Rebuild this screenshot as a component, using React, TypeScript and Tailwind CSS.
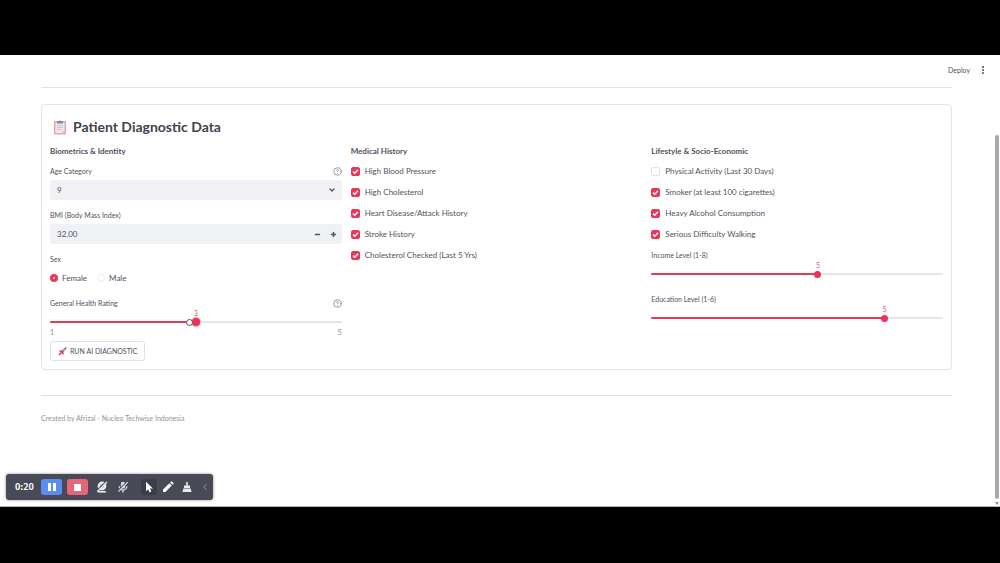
import { useId, useState } from 'react';
import { ChevronDown, ChevronLeft, CircleHelp, EllipsisVertical, Minus, Plus } from 'lucide-react';

const medicalHistory = [
  { label: 'High Blood Pressure', checked: true },
  { label: 'High Cholesterol', checked: true },
  { label: 'Heart Disease/Attack History', checked: true },
  { label: 'Stroke History', checked: true },
  { label: 'Cholesterol Checked (Last 5 Yrs)', checked: true },
];

const lifestyle = [
  { label: 'Physical Activity (Last 30 Days)', checked: false },
  { label: 'Smoker (at least 100 cigarettes)', checked: true },
  { label: 'Heavy Alcohol Consumption', checked: true },
  { label: 'Serious Difficulty Walking', checked: true },
];

function CheckItem({ label, checked }: { label: string; checked: boolean }) {
  return (
    <label className="flex items-center gap-[5px] h-3 text-[8px] leading-3">
      <span className="relative flex w-[9px] h-[9px]">
        <input
          type="checkbox"
          defaultChecked={checked}
          className="peer appearance-none w-full h-full rounded-[2px] border border-[#e3e4e8] bg-white checked:bg-[#ec3659] checked:border-[#ec3659]"
        />
        <svg viewBox="0 0 9 9" className="absolute inset-0 hidden peer-checked:block pointer-events-none" fill="none" stroke="#fff" strokeWidth="1.5">
          <path d="M2 4.6 3.8 6.3 7 2.8" />
        </svg>
      </span>
      {label}
    </label>
  );
}

interface SliderProps {
  label: string;
  min: number;
  max: number;
  initial: number;
  help?: boolean;
  showTicks?: boolean;
  active?: boolean;
}

function SliderField({ label, min, max, initial, help, showTicks, active }: SliderProps) {
  const id = useId();
  const [value, setValue] = useState(initial);
  const percent = ((value - min) / (max - min)) * 100;

  return (
    <div className="flex flex-col gap-[3px]">
      <div className="flex items-center justify-between h-3">
        <label htmlFor={id} className="text-[7px] leading-3">{label}</label>
        {help && <CircleHelp className="w-[9px] h-[9px] text-[#777983]" />}
      </div>
      <div className="relative h-5 flex items-center">
        <div className="w-full h-[2px] rounded-full bg-[#e4e5ea]">
          <div className="h-full rounded-full bg-[#e63b5b]" style={{ width: `${percent}%` }} />
        </div>
        <div className="absolute top-0 h-full flex items-center justify-center w-0" style={{ left: `${percent}%` }}>
          <span className="absolute -top-[3px] text-[7px] leading-2 text-[#e0506f]">{value}</span>
          <span className={`shrink-0 rounded-full bg-[#f03054] ${active ? 'w-2 h-2 ring-1 ring-[#f9a9b8]' : 'w-[7px] h-[7px]'}`} />
          {active && <span className="absolute right-[3px] w-[7px] h-[7px] rounded-full bg-white border border-[#50525c]" />}
        </div>
        {showTicks && (
          <div className="absolute inset-x-0 -bottom-1 flex justify-between text-[7px] leading-2 text-[#8d8f98]">
            <span>{min}</span>
            <span>{max}</span>
          </div>
        )}
        <input
          id={id}
          type="range"
          min={min}
          max={max}
          value={value}
          onChange={(e) => setValue(Number(e.target.value))}
          className="absolute inset-0 w-full h-full opacity-0 cursor-pointer"
        />
      </div>
    </div>
  );
}

function ClipboardIcon() {
  return (
    <svg viewBox="0 0 14 16" className="w-[14px] h-4">
      <rect x="1" y="2" width="12" height="13.5" rx="1" fill="#dba39e" />
      <rect x="2.3" y="3.4" width="9.4" height="10.8" fill="#f3e6f0" />
      <path d="M4 6.5h6M4 8.5h6M4 10.5h5" stroke="#c3b3d4" strokeWidth=".7" />
      <path d="M8.5 14.2 11.7 11v3.2z" fill="#d2c0d8" />
      <path d="M4 4.4V2.3h1.7a1.4 1.4 0 0 1 2.6 0H10v2.1z" fill="#858894" />
    </svg>
  );
}

function RocketIcon() {
  return (
    <svg viewBox="0 0 10 10" className="w-[9px] h-[9px]">
      <path d="M1 4.2 3.6 3.6 6.4 6.4 5.8 9 4.3 7.3 2.7 5.7z" fill="#d92f58" />
      <path d="M3 6.2C4 3.6 6.2 1.2 9.6.4 8.8 3.8 6.4 6 3.8 7z" fill="#8c7288" />
      <path d="M7.4 1.2 9.6.4 8.8 2.6z" fill="#df3b5d" />
      <circle cx="6.6" cy="3.4" r=".9" fill="#d9e6f4" />
      <path d="M.6 9.4 1.4 7l1.8-.8.6.6L3 8.6z" fill="#e3425f" />
    </svg>
  );
}

function RecorderBar() {
  return (
    <div className="absolute left-1.5 bottom-1.5 w-[207px] h-[26px] flex items-center rounded-[3px] bg-[#484b57] text-white shadow-[0_0_3px_rgba(0,0,0,0.45)]">
      <span className="w-[35px] pl-[9px] text-[9px] leading-3 font-bold font-['Noto_Sans_CJK_SC',sans-serif]">0:20</span>
      <button aria-label="Pause" className="w-[21px] h-4 flex items-center justify-center gap-[2px] rounded-[3px] bg-[#5b8def]">
        <span className="w-[3px] h-2 bg-white" />
        <span className="w-[3px] h-2 bg-white" />
      </button>
      <button aria-label="Stop" className="ml-[5px] w-[21px] h-4 flex items-center justify-center rounded-[3px] bg-[#e8667a]">
        <span className="w-[7px] h-[7px] bg-white" />
      </button>
      <button aria-label="Camera off" className="ml-1.5 w-4 h-4 flex items-center justify-center">
        <svg viewBox="0 0 12 12" className="w-3 h-3" fill="none">
          <circle cx="6" cy="5" r="4.4" fill="#e8e9ec" />
          <circle cx="6" cy="5" r="1.6" fill="#484b57" />
          <path d="M2.2 10.8h7.6" stroke="#e8e9ec" strokeWidth="1.6" />
          <path d="M.6 10 9.8.6" stroke="#484b57" strokeWidth="1.2" />
          <path d="M1.2 10.8 11 1" stroke="#e8e9ec" strokeWidth="1.3" />
        </svg>
      </button>
      <button aria-label="Microphone off" className="ml-[5px] w-4 h-4 flex items-center justify-center">
        <svg viewBox="0 0 12 12" className="w-3 h-3" fill="none">
          <rect x="3.8" y=".8" width="4.4" height="6.6" rx="2.2" fill="#dcdde1" />
          <path d="M2.2 5.2a3.8 3.8 0 0 0 7.6 0M6 9v2.4" stroke="#dcdde1" strokeWidth="1.3" />
          <path d="M.8 9.8 9.8.8" stroke="#484b57" strokeWidth="1.2" />
          <path d="M1.4 10.6 10.8 1.2" stroke="#dcdde1" strokeWidth="1.2" />
        </svg>
      </button>
      <button aria-label="Pointer" className="ml-2.5 w-4 h-4 flex items-center justify-center rounded-[3px] bg-[#3b3d48]">
        <svg viewBox="0 0 12 12" className="w-3 h-3" fill="#fff">
          <path d="M3 .8v9.4l2.2-2 1.4 3.2 1.7-.8-1.4-3 3-.2z" />
        </svg>
      </button>
      <button aria-label="Draw" className="ml-[3px] w-4 h-4 flex items-center justify-center">
        <svg viewBox="0 0 12 12" className="w-3 h-3" fill="#fff">
          <path d="M1 11V8.6L7.4 2.2l2.4 2.4L3.4 11zM8.2 1.4l.8-.8q.5-.4 1 0l1.4 1.4q.4.5 0 1l-.8.8z" />
        </svg>
      </button>
      <button aria-label="Clear" className="ml-[3px] w-4 h-4 flex items-center justify-center">
        <svg viewBox="0 0 12 12" className="w-3 h-3" fill="#e8e9ec">
          <path d="M5.2 1h1.6v3.6H9V7H3V4.6h2.2zM2.4 7.6h7.2l1 3.4H1.4z" />
        </svg>
      </button>
      <button aria-label="Collapse" className="ml-1 w-3 h-4 flex items-center justify-center text-[#a4a6af]">
        <ChevronLeft className="w-[10px] h-[10px]" />
      </button>
    </div>
  );
}

export default function App() {
  const [bmi, setBmi] = useState(32);

  return (
    <div className="min-h-screen flex flex-col bg-black text-[#50525c] font-[Lato,sans-serif]">
      <div className="h-[55px]" />
      <div className="relative flex-1 bg-white border-b border-[#b5b5b5]">
        <header className="flex items-center justify-end gap-2 h-8 pr-3 pb-[2px] text-[7px] leading-3">
          <button>Deploy</button>
          <button aria-label="Menu">
            <EllipsisVertical className="w-[10px] h-[10px]" strokeWidth={3} />
          </button>
        </header>

        <main className="pl-[41px] pr-12">
          <hr className="border-[#e4e4e7]" />

          {/* Patient form */}
          <form onSubmit={(e) => e.preventDefault()} className="mt-4 rounded-[4px] border border-[#e4e4e7] px-2 pt-[10px] pb-2">
            <h2 className="flex items-center gap-[6px] pl-[3px] h-6 text-[14px] leading-6 font-bold text-[#41434e]">
              <ClipboardIcon />
              Patient Diagnostic Data
            </h2>

            <div className="mt-1 grid grid-cols-3 gap-[9px]">
              <section className="flex flex-col gap-[9px]">
                <h3 className="-mb-[3px] text-[8px] leading-4 font-bold">Biometrics &amp; Identity</h3>

                <div className="flex flex-col gap-[3px]">
                  <div className="flex items-center justify-between h-3">
                    <label htmlFor="age" className="text-[7px] leading-3">Age Category</label>
                    <CircleHelp className="w-[9px] h-[9px] text-[#777983]" />
                  </div>
                  <div className="relative">
                    <select id="age" defaultValue="9" className="block appearance-none w-full h-5 px-[7px] rounded-[3px] bg-[#f0f1f5] text-[8px]">
                      {[1, 2, 3, 4, 5, 6, 7, 8, 9, 10, 11, 12, 13].map((n) => (
                        <option key={n} value={n}>{n}</option>
                      ))}
                    </select>
                    <ChevronDown className="absolute right-[6px] top-[6px] w-2 h-2 pointer-events-none" strokeWidth={4} />
                  </div>
                </div>

                <div className="flex flex-col gap-[3px]">
                  <label htmlFor="bmi" className="text-[7px] leading-3">BMI (Body Mass Index)</label>
                  <div className="flex items-center h-5 rounded-[3px] bg-[#f0f1f5]">
                    <input
                      id="bmi"
                      type="text"
                      value={bmi.toFixed(2)}
                      onChange={(e) => setBmi(Number(e.target.value) || 0)}
                      className="flex-1 min-w-0 h-full px-[7px] bg-transparent text-[8px] focus:outline-none"
                    />
                    <button type="button" aria-label="Decrease" onClick={() => setBmi(bmi - 1)} className="w-4 h-full flex items-center justify-center">
                      <Minus className="w-[7px] h-[7px]" strokeWidth={5} />
                    </button>
                    <button type="button" aria-label="Increase" onClick={() => setBmi(bmi + 1)} className="w-4 h-full flex items-center justify-center">
                      <Plus className="w-[7px] h-[7px]" strokeWidth={5} />
                    </button>
                  </div>
                </div>

                <fieldset className="flex flex-col">
                  <legend className="text-[7px] leading-3 mb-[3px]">Sex</legend>
                  <div className="flex items-center gap-[10px] h-5 text-[8px] leading-3">
                    {['Female', 'Male'].map((sex) => (
                      <label key={sex} className="flex items-center gap-1">
                        <input
                          type="radio"
                          name="sex"
                          defaultChecked={sex === 'Female'}
                          className="appearance-none w-2 h-2 rounded-full border border-[#e9eaee] checked:border-[3px] checked:border-[#ec3659]"
                        />
                        {sex}
                      </label>
                    ))}
                  </div>
                </fieldset>

                <SliderField label="General Health Rating" min={1} max={5} initial={3} help showTicks active />

                <button className="self-start flex items-center gap-[3px] h-5 px-[7px] rounded-[3px] border border-[#e0e1e6] text-[7px] leading-3">
                  <RocketIcon />
                  RUN AI DIAGNOSTIC
                </button>
              </section>

              <section className="flex flex-col gap-[9px]">
                <h3 className="-mb-[3px] text-[8px] leading-4 font-bold">Medical History</h3>
                {medicalHistory.map((item) => (
                  <CheckItem key={item.label} {...item} />
                ))}
              </section>

              <section className="flex flex-col gap-[9px]">
                <h3 className="-mb-[3px] text-[8px] leading-4 font-bold">Lifestyle &amp; Socio-Economic</h3>
                {lifestyle.map((item) => (
                  <CheckItem key={item.label} {...item} />
                ))}
                <SliderField label="Income Level (1-8)" min={1} max={8} initial={5} />
                <SliderField label="Education Level (1-6)" min={1} max={6} initial={5} />
              </section>
            </div>
          </form>

          <hr className="mt-[25px] border-[#e4e4e7]" />
          <footer className="mt-4 text-[7px] leading-3 text-[#92949c]">
            Created by Afrizal - Nucleo Techwise Indonesia
          </footer>
        </main>

        {/* Page scrollbar */}
        <div className="absolute right-[1px] top-20 bottom-[7px] w-1 rounded-full bg-[#a9a9ac]" />
        <svg viewBox="0 0 4 3" className="absolute right-[1px] bottom-[1px] w-1 h-[3px]" fill="#8d8d90">
          <path d="M0 0h4L2 3z" />
        </svg>

        <RecorderBar />
      </div>
      <div className="h-14" />
    </div>
  );
}
